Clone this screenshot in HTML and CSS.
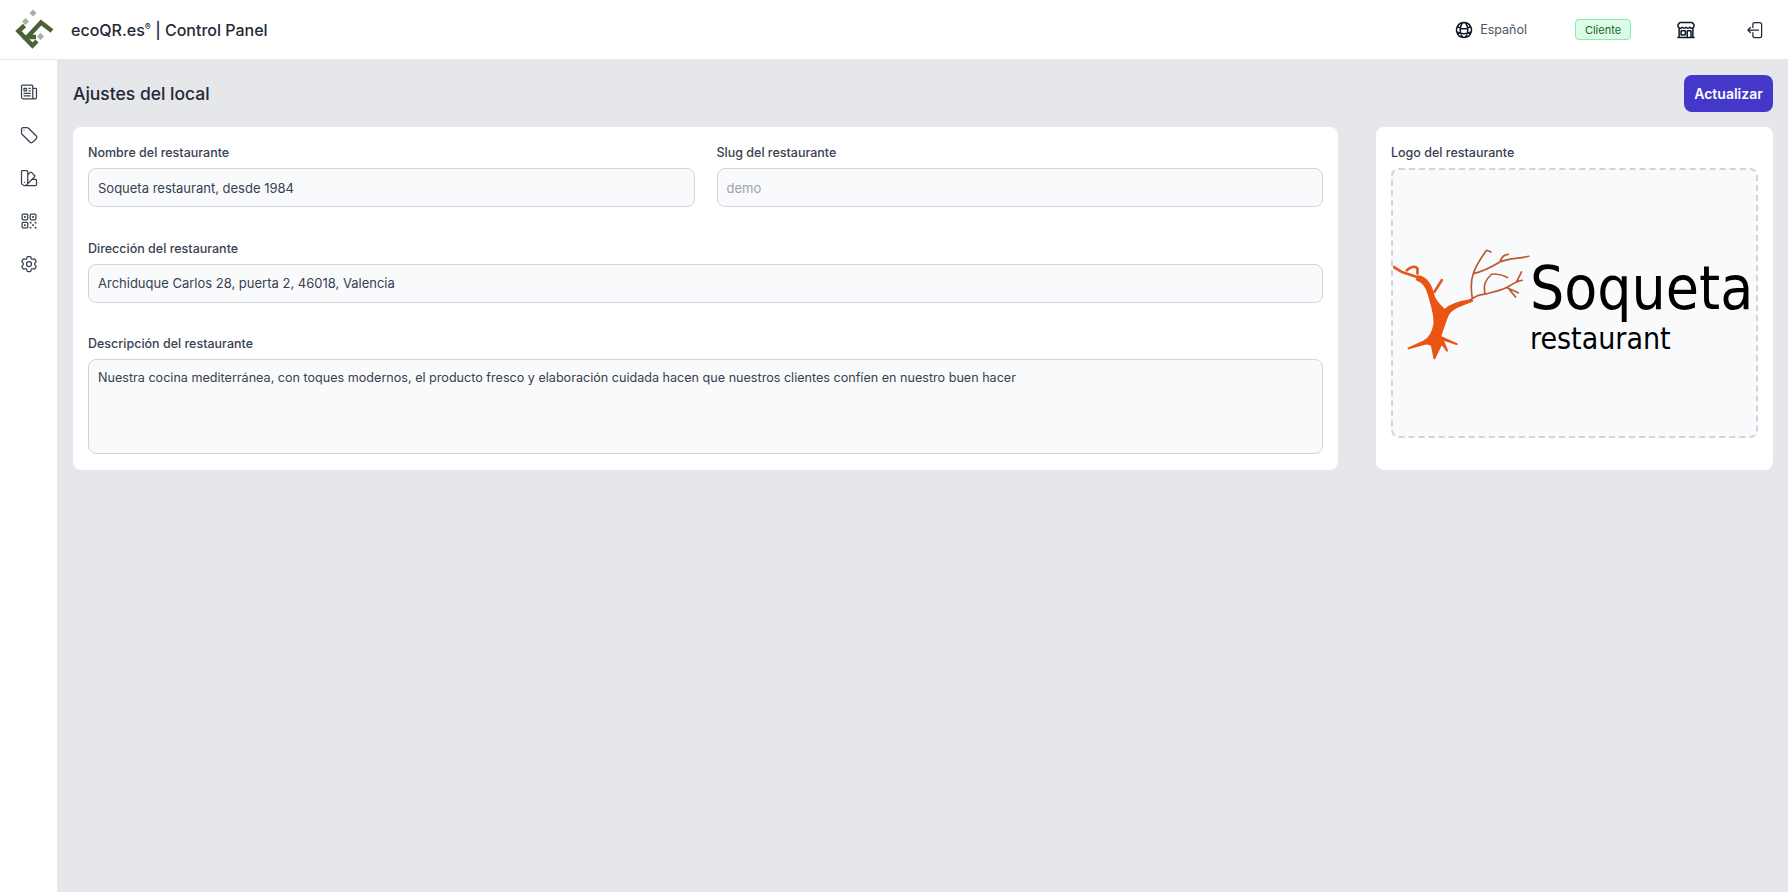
FILE: index.html
```html
<!DOCTYPE html>
<html lang="es">
<head>
<meta charset="utf-8">
<title>ecoQR.es | Control Panel</title>
<link rel="stylesheet" href="styles.css">
</head>
<body>
<header class="topbar">
  <div class="brand">
    <svg class="brand-logo" viewBox="15 10 39 39">
      <path class="logo-dark" d="M24.500 25.500 L18.500 31 L32.500 45.500 L37 41"/>
      <path class="logo-dark" d="M36 37 L27.500 37 L41 22.500 L52 31"/>
      <path class="logo-light" d="M33 9.500 L36.500 13 L33 16.500 L29.500 13 Z M25.500 18 L29 21.500 L25.500 25 L22 21.500 Z M40.500 33 L44 36.500 L40.500 40 L37 36.500 Z"/>
    </svg>
    <span class="brand-name">ecoQR.es<sup>®</sup> | Control Panel</span>
  </div>
  <div class="top-actions">
    <div class="lang">
      <svg class="icon globe" viewBox="0 0 24 24"><path d="M12 21a9.004 9.004 0 008.716-6.747M12 21a9.004 9.004 0 01-8.716-6.747M12 21c2.485 0 4.500-4.030 4.500-9S14.485 3 12 3m0 18c-2.485 0-4.500-4.030-4.500-9S9.515 3 12 3m0 0a8.997 8.997 0 017.843 4.582M12 3a8.997 8.997 0 00-7.843 4.582m15.686 0A11.953 11.953 0 0112 10.500c-2.998 0-5.740-1.100-7.843-2.918m15.686 0A8.959 8.959 0 0121 12c0 .778-.099 1.533-.284 2.253m0 0A17.919 17.919 0 0112 16.500c-3.162 0-6.133-.815-8.716-2.247m0 0A9.004 9.004 0 013 12c0-1.605.42-3.113 1.157-4.418"/></svg>
      <span>Español</span>
    </div>
    <span class="badge">Cliente</span>
    <svg class="icon store" viewBox="0 0 24 24"><path d="M13.500 21v-7.500a.75.75 0 01.75-.75h3a.75.75 0 01.75.75V21m-4.500 0H2.360m11.140 0H18m0 0h3.640m-1.390 0V9.349m-16.500 11.650V9.350m0 0a3.001 3.001 0 003.750-.615A2.993 2.993 0 009.750 9.750c.896 0 1.700-.393 2.250-1.016a2.993 2.993 0 002.250 1.016c.896 0 1.700-.393 2.250-1.016a3.001 3.001 0 003.750.614m-16.500 0a3.004 3.004 0 01-.621-4.720L4.318 3.440A1.500 1.500 0 015.378 3h13.243a1.500 1.500 0 011.060.44l1.190 1.189a3 3 0 01-.621 4.720m-13.500 8.650h3.750a.75.75 0 00.75-.75V13.500a.75.75 0 00-.75-.75H6.750a.75.75 0 00-.75.75v3.750c0 .415.336.75.75.75z"/></svg>
    <svg class="icon exit" viewBox="0 0 24 24"><path d="M8.250 9V5.250A2.250 2.250 0 0110.500 3h6a2.250 2.250 0 012.250 2.250v13.500A2.250 2.250 0 0116.500 21h-6a2.250 2.250 0 01-2.250-2.250V15m-3 0l-3-3m0 0l3-3m-3 3H15"/></svg>
  </div>
</header>
<div class="shell">
  <nav class="sidebar">
    <svg class="icon side" viewBox="0 0 24 24"><path d="M12 7.500h1.500m-1.500 3h1.500m-7.500 3h7.500m-7.500 3h7.500m3-9h3.375c.621 0 1.125.504 1.125 1.125V18a2.250 2.250 0 01-2.250 2.250M16.500 7.500V18a2.250 2.250 0 002.250 2.250M16.500 7.500V4.875c0-.621-.504-1.125-1.125-1.125H4.125C3.504 3.750 3 4.254 3 4.875V18a2.250 2.250 0 002.250 2.250h13.500M6 7.500h3v3H6v-3z"/></svg>
    <svg class="icon side" viewBox="0 0 24 24"><path d="M9.568 3H5.250A2.250 2.250 0 003 5.250v4.318c0 .597.237 1.170.659 1.591l9.581 9.581c.699.699 1.780.872 2.607.33a18.095 18.095 0 005.223-5.223c.542-.827.369-1.908-.33-2.607L11.160 3.660A2.250 2.250 0 009.568 3z"/><path d="M6 6h.008v.008H6V6z"/></svg>
    <svg class="icon side" viewBox="0 0 24 24"><path d="M4.098 19.902a3.750 3.750 0 005.304 0l6.401-6.402M6.750 21A3.750 3.750 0 013 17.250V4.125C3 3.504 3.504 3 4.125 3h5.250c.621 0 1.125.504 1.125 1.125v4.072M6.750 21a3.750 3.750 0 003.750-3.750V8.197M6.750 21h13.125c.621 0 1.125-.504 1.125-1.125v-5.250c0-.621-.504-1.125-1.125-1.125h-4.072M10.500 8.197l2.880-2.880c.438-.439 1.150-.439 1.590 0l3.712 3.713c.44.44.44 1.152 0 1.590l-2.879 2.880M6.750 17.250h.008v.008H6.750v-.008z"/></svg>
    <svg class="icon side" viewBox="0 0 24 24"><path d="M3.750 4.875c0-.621.504-1.125 1.125-1.125h4.500c.621 0 1.125.504 1.125 1.125v4.500c0 .621-.504 1.125-1.125 1.125h-4.500A1.125 1.125 0 013.750 9.375v-4.500zM3.750 14.625c0-.621.504-1.125 1.125-1.125h4.500c.621 0 1.125.504 1.125 1.125v4.500c0 .621-.504 1.125-1.125 1.125h-4.500a1.125 1.125 0 01-1.125-1.125v-4.500zM13.500 4.875c0-.621.504-1.125 1.125-1.125h4.500c.621 0 1.125.504 1.125 1.125v4.500c0 .621-.504 1.125-1.125 1.125h-4.500A1.125 1.125 0 0113.500 9.375v-4.500z"/><path d="M6.750 6.750h.75v.75h-.75v-.75zM6.750 16.500h.75v.75h-.75v-.75zM16.500 6.750h.75v.75h-.75v-.75zM13.500 13.500h.75v.75h-.75v-.75zM13.500 19.500h.75v.75h-.75v-.75zM19.500 13.500h.75v.75h-.75v-.75zM19.500 19.500h.75v.75h-.75v-.75zM16.500 16.500h.75v.75h-.75v-.75z"/></svg>
    <svg class="icon side" viewBox="0 0 24 24"><path d="M9.594 3.940c.09-.542.56-.94 1.110-.94h2.593c.55 0 1.020.398 1.110.94l.213 1.281c.063.374.313.686.645.87.074.04.147.083.22.127.324.196.72.257 1.075.124l1.217-.456a1.125 1.125 0 011.370.49l1.296 2.247a1.125 1.125 0 01-.26 1.431l-1.003.827c-.293.24-.438.613-.431.992a6.759 6.759 0 010 .255c-.007.378.138.75.43.99l1.005.828c.424.35.534.954.26 1.430l-1.298 2.247a1.125 1.125 0 01-1.369.491l-1.217-.456c-.355-.133-.75-.072-1.076.124a6.570 6.570 0 01-.22.128c-.331.183-.581.495-.644.869l-.213 1.280c-.09.543-.56.941-1.110.941h-2.594c-.55 0-1.020-.398-1.110-.94l-.213-1.281c-.062-.374-.312-.686-.644-.87a6.520 6.520 0 01-.22-.127c-.325-.196-.72-.257-1.076-.124l-1.217.456a1.125 1.125 0 01-1.369-.49l-1.297-2.247a1.125 1.125 0 01.26-1.431l1.004-.827c.292-.24.437-.613.43-.992a6.932 6.932 0 010-.255c.007-.378-.138-.75-.43-.99l-1.004-.828a1.125 1.125 0 01-.26-1.430l1.297-2.247a1.125 1.125 0 011.370-.491l1.216.456c.356.133.751.072 1.076-.124.072-.044.146-.087.22-.128.332-.183.582-.495.644-.869l.214-1.281z"/><path d="M15 12a3 3 0 11-6 0 3 3 0 016 0z"/></svg>
  </nav>
  <main class="content">
    <div class="title-row">
      <h1>Ajustes del local</h1>
      <button class="primary" type="button">Actualizar</button>
    </div>
    <div class="columns">
      <section class="card form-card">
        <div class="row two">
          <div class="field">
            <label>Nombre del restaurante</label>
            <div class="input">Soqueta restaurant, desde 1984</div>
          </div>
          <div class="field">
            <label>Slug del restaurante</label>
            <div class="input muted">demo</div>
          </div>
        </div>
        <div class="field">
          <label>Dirección del restaurante</label>
          <div class="input">Archiduque Carlos 28, puerta 2, 46018, Valencia</div>
        </div>
        <div class="field">
          <label>Descripción del restaurante</label>
          <div class="input area">Nuestra cocina mediterránea, con toques modernos, el producto fresco y elaboración cuidada hacen que nuestros clientes confíen en nuestro buen hacer</div>
        </div>
      </section>
      <section class="card logo-card">
        <div class="field">
          <label>Logo del restaurante</label>
          <div class="dropzone">
            <svg class="tree" viewBox="24 50 420 340">
              <path class="tree-trunk" d="M100 138 C125 142 138 165 145 195 C150 215 165 225 178 240 C195 222 225 215 255 210 L262 212 C230 225 200 232 188 255 C178 280 172 300 165 320 L215 342 L172 328 L186 362 L170 340 L160 360 L148 385 L140 345 L125 340 L70 355 L115 335 C135 325 145 305 148 280 C150 250 140 225 130 190 C125 170 115 155 95 148 Z"/>
              <path class="tree-limb" d="M25 110 L50 125 L100 142 M65 120 C75 110 90 105 97 115 L97 130 M148 185 L170 150"/>
              <path class="tree-branch" d="M255 210 C270 200 275 195 300 192 C330 185 350 180 365 172 L395 155 L410 125 M365 172 L400 188 M375 180 L392 200 M395 155 L412 150 M300 190 C295 165 300 150 320 132 C335 130 350 132 368 142 M262 205 C258 180 258 150 265 130 C275 100 290 80 305 60 L318 65 M265 130 C290 125 320 110 345 95 C350 80 360 72 370 72 M345 95 C370 85 395 85 432 78"/>
            </svg>
            <div class="logo-text">
              <span class="logo-big">Soqueta</span>
              <span class="logo-small">restaurant</span>
            </div>
          </div>
        </div>
      </section>
    </div>
  </main>
</div>
</body>
</html>
```

FILE: styles.css
```css
* { box-sizing: border-box; }
html, body { margin: 0; height: 100%; }
body {
  font-family: Inter, "Liberation Sans", sans-serif;
  color: #111827;
  background: #e5e7eb;
  height: 892px;
  overflow: hidden;
  display: flex;
  flex-direction: column;
}
.topbar {
  height: 60px;
  flex: none;
  background: #fff;
  border-bottom: 1px solid #e5e7eb;
  display: flex;
  align-items: center;
  justify-content: space-between;
  padding: 0 22px 0 15px;
}
.brand { display: flex; align-items: center; gap: 17px; }
.brand-logo { width: 39px; height: 39px; overflow: visible; }
.logo-dark { fill: none; stroke: #4b6137; stroke-width: 4.5; }
.logo-light { fill: #a3b598; }
.brand-name { font-size: 16px; font-weight: 500; color: #1f2937; }
.brand-name sup { font-size: 9px; line-height: 0; }
.top-actions { display: flex; align-items: center; }
.icon {
  width: 20px; height: 20px;
  fill: none; stroke: #1f2937; stroke-width: 1.5;
  stroke-linecap: round; stroke-linejoin: round;
  flex: none;
}
.store { margin-left: 45px; stroke-width: 1.8; stroke: #111827; }
.exit { margin-left: 50px; }
.lang { display: flex; align-items: center; gap: 6px; font-size: 12.500px; color: #4b5563; }
.globe { stroke: #111827; stroke-width: 1.8; }
.badge {
  margin-left: 48px;
  width: 56px; height: 21px;
  display: flex; align-items: center; justify-content: center;
  font-size: 11px; color: #166534;
  background: #dcfce7;
  border: 1px solid #86efac;
  border-radius: 4px;
}
.shell { flex: 1; display: flex; min-height: 0; }
.sidebar {
  width: 57px; flex: none;
  background: #fff;
  display: flex; flex-direction: column; align-items: center;
  gap: 23px;
  padding-top: 22px;
}
.side { stroke: #374151; }
.content { flex: 1; padding: 15px 15px 15px 16px; min-width: 0; }
.title-row {
  height: 37px;
  display: flex; align-items: center; justify-content: space-between;
  margin-bottom: 15px;
}
h1 { margin: 0; font-size: 17.500px; font-weight: 500; color: #1f2937; }
.primary {
  width: 89px; height: 37px;
  border: 0; border-radius: 8px;
  background: #4338ca; color: #fff;
  font: 600 14px Inter, "Liberation Sans", sans-serif;
}
.columns { display: grid; grid-template-columns: 1265px minmax(0, 1fr); gap: 38px; }
.card { background: #fff; border-radius: 8px; height: 343px; min-width: 0; }
.form-card {
  padding: 17px 15px 15px;
  display: flex; flex-direction: column; gap: 32.500px;
}
.logo-card { padding: 17px 15px 15px; }
.row.two { display: grid; grid-template-columns: 1fr 1fr; gap: 22px; }
.field { display: flex; flex-direction: column; gap: 7px; }
label { font-size: 12.500px; line-height: 17px; font-weight: 450; color: #374151; }
.input {
  height: 39px;
  padding: 0 9px;
  display: flex; align-items: center;
  font-size: 13px; color: #374151;
  background: #f9fafb;
  border: 1px solid #d1d5db;
  border-radius: 8px;
}
.input.muted { color: #9ca3af; }
.input.area { height: 95px; align-items: flex-start; padding-top: 10px; line-height: 16px; font-size: 12.600px; }
.dropzone {
  height: 270px;
  background: #f9fafb;
  border: 2px dashed #d1d5db;
  border-radius: 8px;
  display: flex; align-items: center;
  overflow: hidden;
}
.tree { width: 140px; height: 113px; flex: none; }
.tree-trunk { fill: #ea5414; stroke: #ea5414; stroke-width: 6; stroke-linejoin: round; }
.tree-limb { fill: none; stroke: #e4581f; stroke-width: 8; stroke-linecap: round; stroke-linejoin: round; }
.tree-branch { fill: none; stroke: #b9592f; stroke-width: 5; stroke-linecap: round; stroke-linejoin: round; }
.logo-text {
  display: flex; flex-direction: column; gap: 6px;
  margin: 6px 0 0 -3px;
  color: #000;
  font-family: "DejaVu Sans Condensed", "DejaVu Sans", sans-serif;
}
.logo-big { font-size: 60px; line-height: 60px; white-space: nowrap; }
.logo-small { font-size: 30px; line-height: 30px; white-space: nowrap; }
```
